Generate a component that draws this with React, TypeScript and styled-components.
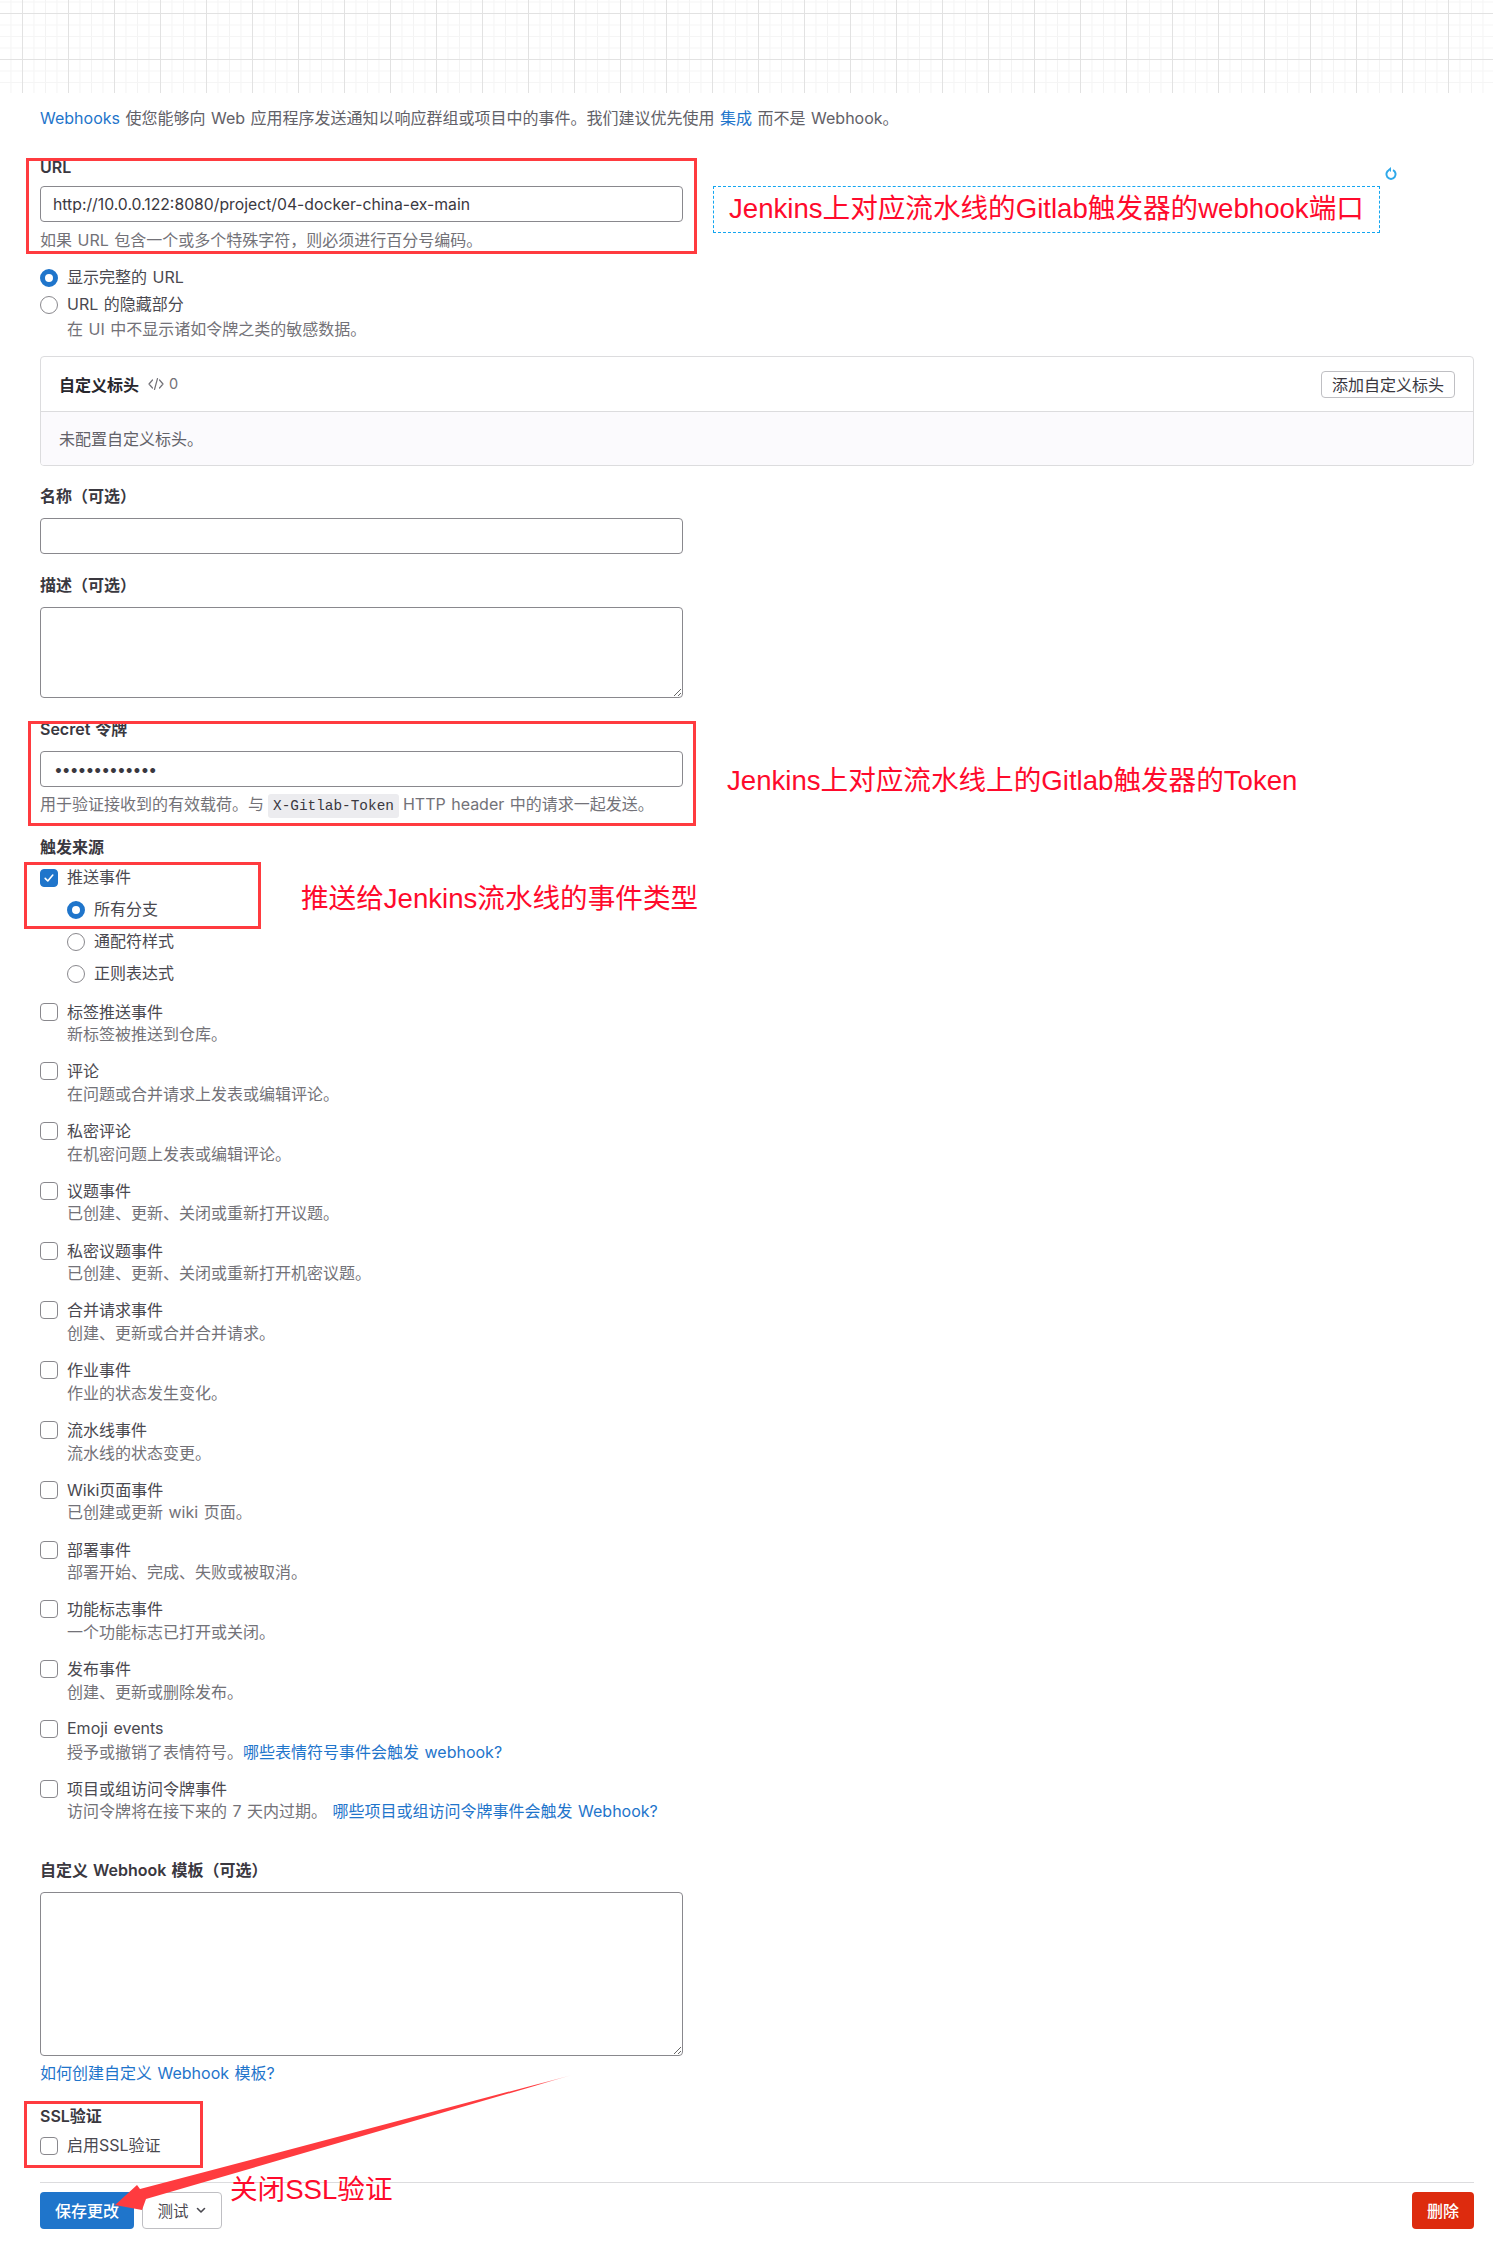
import React from "react";
import styled, { createGlobalStyle } from "styled-components";

const cjk = `Inter, "Noto Sans CJK SC", sans-serif`;

const Global = createGlobalStyle`
  html, body { margin: 0; padding: 0; background: #fff; }
  body { font-family: ${cjk}; font-size: 16px; color: #3a383f; word-spacing: 1px; }
  * { box-sizing: border-box; }
`;

const Page = styled.div`
  position: relative;
  width: 1493px;
  height: 2265px;
  overflow: hidden;
`;

const GridHero = styled.div`
  height: 93px;
  background-color: #fff;
  background-image:
    linear-gradient(#e2e2e2 1px, transparent 1px),
    linear-gradient(90deg, #e2e2e2 1px, transparent 1px),
    linear-gradient(#f5f5f5 1px, transparent 1px),
    linear-gradient(90deg, #f3f3f3 1px, transparent 1px);
  background-size: 46px 46px, 46px 46px, 11.5px 11.5px, 11.5px 11.5px;
  background-position: 0 13px, 22px 0, 0 1.5px, 10.5px 0;
`;

const Form = styled.main`
  padding: 13px 19px 0 40px;
`;

const Intro = styled.p`
  margin: 0 0 26px;
  line-height: 24px;
  color: #626168;
`;

const Link = styled.a`
  color: #1f75cb;
  text-decoration: none;
`;

const BlockLink = styled(Link)`
  display: block;
  margin-top: 6px;
  line-height: 22px;
`;

const Label = styled.div<{ $mt?: number; $pb?: number }>`
  margin-top: ${(p) => p.$mt ?? 0}px;
  padding-bottom: ${(p) => p.$pb ?? 0}px;
  font-weight: 600;
  line-height: 22px;
  color: #3a383f;
`;

const TextField = styled.input`
  display: block;
  width: 643px;
  height: 36px;
  margin-top: 8px;
  padding: 0 12px;
  border: 1px solid #89888d;
  border-radius: 4px;
  background: #fff;
  font: 15.75px ${cjk};
  color: #3a383f;
  outline: none;
`;

const SecretField = styled(TextField)`
  padding: 0 13px;
  letter-spacing: -1px;
`;

const TextArea = styled.textarea<{ $h: number }>`
  display: block;
  width: 643px;
  height: ${(p) => p.$h}px;
  margin-top: 8px;
  border: 1px solid #89888d;
  border-radius: 4px;
  background: #fff;
  outline: none;
`;

const Help = styled.div<{ $mt: number }>`
  margin-top: ${(p) => p.$mt}px;
  height: 22px;
  line-height: 22px;
  color: #737278;
  white-space: nowrap;
`;

const Mono = styled.code`
  display: inline-block;
  margin: 0 4px;
  padding: 0 5px;
  height: 24px;
  vertical-align: middle;
  border-radius: 3px;
  background: #ececef;
  color: #3a383f;
  font: 14.4px/24px "Liberation Mono", "DejaVu Sans Mono", monospace;
`;

const OptionGroup = styled.div<{ $mt: number }>`
  margin-top: ${(p) => p.$mt}px;
`;

const Option = styled.div<{ $indent?: boolean; $h: number }>`
  display: flex;
  align-items: center;
  gap: 9px;
  height: ${(p) => p.$h}px;
  margin-left: ${(p) => (p.$indent ? 27 : 0)}px;
  line-height: 22px;
  color: #4a4950;
`;

const OptionText = styled.span`
  margin-bottom: 2px;
`;

const Radio = styled.span<{ $on?: boolean }>`
  flex: none;
  width: 18px;
  height: 18px;
  border-radius: 50%;
  background: #fff;
  border: ${(p) => (p.$on ? "5px solid #1f75cb" : "1px solid #89888d")};
`;

const Box = styled.span<{ $on?: boolean }>`
  flex: none;
  display: flex;
  align-items: center;
  justify-content: center;
  width: 18px;
  height: 18px;
  border-radius: 4px;
  background: ${(p) => (p.$on ? "#1f75cb" : "#fff")};
  border: 1px solid ${(p) => (p.$on ? "#1f75cb" : "#89888d")};
`;

const SubHelp = styled.div`
  margin-left: 27px;
  height: 22px;
  line-height: 20px;
  color: #737278;
`;

const Card = styled.section`
  margin-top: 15px;
  width: 1434px;
  height: 110px;
  border: 1px solid #dcdcde;
  border-radius: 4px;
  overflow: hidden;
`;

const CardHead = styled.header`
  display: flex;
  align-items: center;
  justify-content: space-between;
  height: 55px;
  padding: 0 18px;
  border-bottom: 1px solid #dcdcde;
`;

const CardTitle = styled.div`
  display: flex;
  align-items: center;
  gap: 9px;
  padding-bottom: 1px;
  font-weight: 600;
  color: #28272d;
`;

const Count = styled.span`
  display: flex;
  align-items: center;
  gap: 5px;
  font-weight: 400;
  font-size: 14.5px;
  color: #737278;
`;

const Button = styled.button`
  height: 27px;
  padding: 0 10px 2px;
  border: 1px solid #bfbfc3;
  border-radius: 4px;
  background: #fff;
  font: 16px ${cjk};
  color: #3a383f;
`;

const CardBody = styled.div`
  height: 54px;
  padding: 0 18px 2px;
  display: flex;
  align-items: center;
  background: #fbfafd;
  color: #626168;
`;

const Events = styled.div`
  display: flex;
  flex-direction: column;
  gap: 13.8px;
  margin-top: 10px;
`;

const EventRow = styled.div`
  height: 46px;
`;

const EventTitle = styled.div`
  display: flex;
  align-items: center;
  gap: 9px;
  height: 23px;
  color: #4a4950;
`;

const EventHelp = styled.div`
  margin-left: 27px;
  line-height: 23px;
  color: #737278;
`;

const Rule = styled.hr`
  margin: 20px 0 9px;
  border: 0;
  border-top: 1px solid #dcdcde;
`;

const Actions = styled.div`
  display: flex;
  align-items: center;
  gap: 8px;
`;

const Primary = styled.button`
  width: 94px;
  height: 37px;
  border: 0;
  border-radius: 4px;
  background: #1f75cb;
  color: #fff;
  font: 500 16px ${cjk};
`;

const Secondary = styled.button`
  display: flex;
  align-items: center;
  justify-content: center;
  gap: 6px;
  width: 80px;
  height: 37px;
  border: 1px solid #bfbfc3;
  border-radius: 4px;
  background: #fff;
  color: #4a4950;
  font: 15.5px ${cjk};
`;

const Danger = styled.button`
  margin-left: auto;
  width: 62px;
  height: 37px;
  border: 0;
  border-radius: 4px;
  background: #dd2b0e;
  color: #fff;
  font: 500 16px ${cjk};
`;

const RedFrame = styled.div<{ $x: number; $y: number; $w: number; $h: number }>`
  position: absolute;
  left: ${(p) => p.$x}px;
  top: ${(p) => p.$y}px;
  width: ${(p) => p.$w}px;
  height: ${(p) => p.$h}px;
  border: 3px solid #ff3b3f;
  pointer-events: none;
`;

const Note = styled.div<{ $x: number; $y: number }>`
  position: absolute;
  left: ${(p) => p.$x}px;
  top: ${(p) => p.$y}px;
  font: 27.6px/40px "Liberation Sans", "Noto Sans CJK SC", sans-serif;
  word-spacing: 0;
  color: #ff0a2c;
  white-space: nowrap;
`;

const NoteBox = styled.div`
  position: absolute;
  left: 713px;
  top: 186px;
  width: 667px;
  height: 47px;
  border: 1px dashed #12a5f0;
`;

const Overlay = styled.svg<{ $x: number; $y: number }>`
  position: absolute;
  left: ${(p) => p.$x}px;
  top: ${(p) => p.$y}px;
  overflow: visible;
`;

const Check = () => (
  <svg width="12" height="12" viewBox="0 0 12 12" fill="none">
    <path d="M2.2 6.4 4.8 9 9.8 3" stroke="#fff" strokeWidth="1.6" strokeLinecap="round" strokeLinejoin="round" />
  </svg>
);

const events: [string, React.ReactNode][] = [
  ["标签推送事件", "新标签被推送到仓库。"],
  ["评论", "在问题或合并请求上发表或编辑评论。"],
  ["私密评论", "在机密问题上发表或编辑评论。"],
  ["议题事件", "已创建、更新、关闭或重新打开议题。"],
  ["私密议题事件", "已创建、更新、关闭或重新打开机密议题。"],
  ["合并请求事件", "创建、更新或合并合并请求。"],
  ["作业事件", "作业的状态发生变化。"],
  ["流水线事件", "流水线的状态变更。"],
  ["Wiki页面事件", "已创建或更新 wiki 页面。"],
  ["部署事件", "部署开始、完成、失败或被取消。"],
  ["功能标志事件", "一个功能标志已打开或关闭。"],
  ["发布事件", "创建、更新或删除发布。"],
  ["Emoji events", <>授予或撤销了表情符号。<Link>哪些表情符号事件会触发 webhook?</Link></>],
  ["项目或组访问令牌事件", <>访问令牌将在接下来的 7 天内过期。 <Link>哪些项目或组访问令牌事件会触发 Webhook?</Link></>],
];

export default function App() {
  return (
    <Page>
      <Global />
      <GridHero />
      <Form>
        <Intro>
          <Link>Webhooks</Link> 使您能够向 Web 应用程序发送通知以响应群组或项目中的事件。我们建议优先使用 <Link>集成</Link> 而不是 Webhook。
        </Intro>

        <Label>URL</Label>
        <TextField readOnly value="http://10.0.0.122:8080/project/04-docker-china-ex-main" />
        <Help $mt={7}>如果 URL 包含一个或多个特殊字符，则必须进行百分号编码。</Help>

        <OptionGroup $mt={13}>
          <Option $h={27}>
            <Radio $on /> <OptionText>显示完整的 URL</OptionText>
          </Option>
          <Option $h={28}>
            <Radio /> <OptionText>URL 的隐藏部分</OptionText>
          </Option>
          <SubHelp>在 UI 中不显示诸如令牌之类的敏感数据。</SubHelp>
        </OptionGroup>

        <Card>
          <CardHead>
            <CardTitle>
              自定义标头
              <Count>
                <svg width="16" height="16" viewBox="0 0 16 16" fill="none" stroke="#737278" strokeWidth="1.2" strokeLinecap="round" strokeLinejoin="round">
                  <path d="M4.5 4 1 8l3.5 4M11.5 4 15 8l-3.5 4M9.5 2.5l-3 11" />
                </svg>
                0
              </Count>
            </CardTitle>
            <Button>添加自定义标头</Button>
          </CardHead>
          <CardBody>未配置自定义标头。</CardBody>
        </Card>

        <Label $mt={19} $pb={3}>名称（可选）</Label>
        <TextField readOnly />

        <Label $mt={20} $pb={3}>描述（可选）</Label>
        <TextArea readOnly $h={91} />

        <Label $mt={20} $pb={3}>Secret 令牌</Label>
        <SecretField readOnly type="password" value="1234567890123" />
        <Help $mt={6}>
          用于验证接收到的有效载荷。与<Mono>X-Gitlab-Token</Mono>HTTP header 中的请求一起发送。
        </Help>

        <Label $mt={21}>触发来源</Label>
        <OptionGroup $mt={4}>
          <Option $h={32}>
            <Box $on><Check /></Box> <OptionText>推送事件</OptionText>
          </Option>
          <Option $h={32} $indent>
            <Radio $on /> <OptionText>所有分支</OptionText>
          </Option>
          <Option $h={32} $indent>
            <Radio /> <OptionText>通配符样式</OptionText>
          </Option>
          <Option $h={32} $indent>
            <Radio /> <OptionText>正则表达式</OptionText>
          </Option>
        </OptionGroup>

        <Events>
          {events.map(([title, help]) => (
            <EventRow key={title}>
              <EventTitle>
                <Box /> <OptionText>{title}</OptionText>
              </EventTitle>
              <EventHelp>{help}</EventHelp>
            </EventRow>
          ))}
        </Events>

        <Label $mt={35.6} $pb={3}>自定义 Webhook 模板（可选）</Label>
        <TextArea readOnly $h={164} />
        <BlockLink>如何创建自定义 Webhook 模板?</BlockLink>

        <Label $mt={21} $pb={3}>SSL验证</Label>
        <Option $h={32}>
          <Box /> <OptionText>启用SSL验证</OptionText>
        </Option>

        <Rule />
        <Actions>
          <Primary>保存更改</Primary>
          <Secondary>
            测试
            <svg width="12" height="12" viewBox="0 0 12 12" fill="none" stroke="#4a4950" strokeWidth="1.6" strokeLinecap="round" strokeLinejoin="round">
              <path d="M2.5 4.5 6 8l3.5-3.5" />
            </svg>
          </Secondary>
          <Danger>删除</Danger>
        </Actions>
      </Form>

      <RedFrame $x={26} $y={158} $w={671} $h={96} />
      <RedFrame $x={28} $y={721} $w={668} $h={105} />
      <RedFrame $x={24} $y={862} $w={237} $h={67} />
      <RedFrame $x={24} $y={2101} $w={179} $h={67} />

      <NoteBox />
      <Note $x={729} $y={189}>Jenkins上对应流水线的Gitlab触发器的webhook端口</Note>
      <Note $x={727} $y={761}>Jenkins上对应流水线上的Gitlab触发器的Token</Note>
      <Note $x={301} $y={879}>推送给Jenkins流水线的事件类型</Note>
      <Note $x={230} $y={2170}>关闭SSL验证</Note>

      <Overlay $x={1384} $y={166} width="14" height="16" viewBox="0 0 14 16" fill="none" stroke="#2fa9ea" strokeWidth="2">
        <path d="M5 4.2A4.6 4.6 0 1 0 9 4.2" />
        <path d="M7 1v5l-3-2.5z" fill="#2fa9ea" stroke="none" />
      </Overlay>

      <Overlay $x={0} $y={0} width="1" height="1">
        <defs>
          <linearGradient id="arrowFade" gradientUnits="userSpaceOnUse" x1="572" y1="2075" x2="115" y2="2207">
            <stop offset="0" stopColor="#ff3b3f" stopOpacity="0.15" />
            <stop offset="0.08" stopColor="#ff3b3f" />
            <stop offset="1" stopColor="#ff3b3f" />
          </linearGradient>
        </defs>
        <polygon points="572,2075 146,2199 142,2210 115,2205 137,2185 140,2189" fill="url(#arrowFade)" />
      </Overlay>
    </Page>
  );
}
